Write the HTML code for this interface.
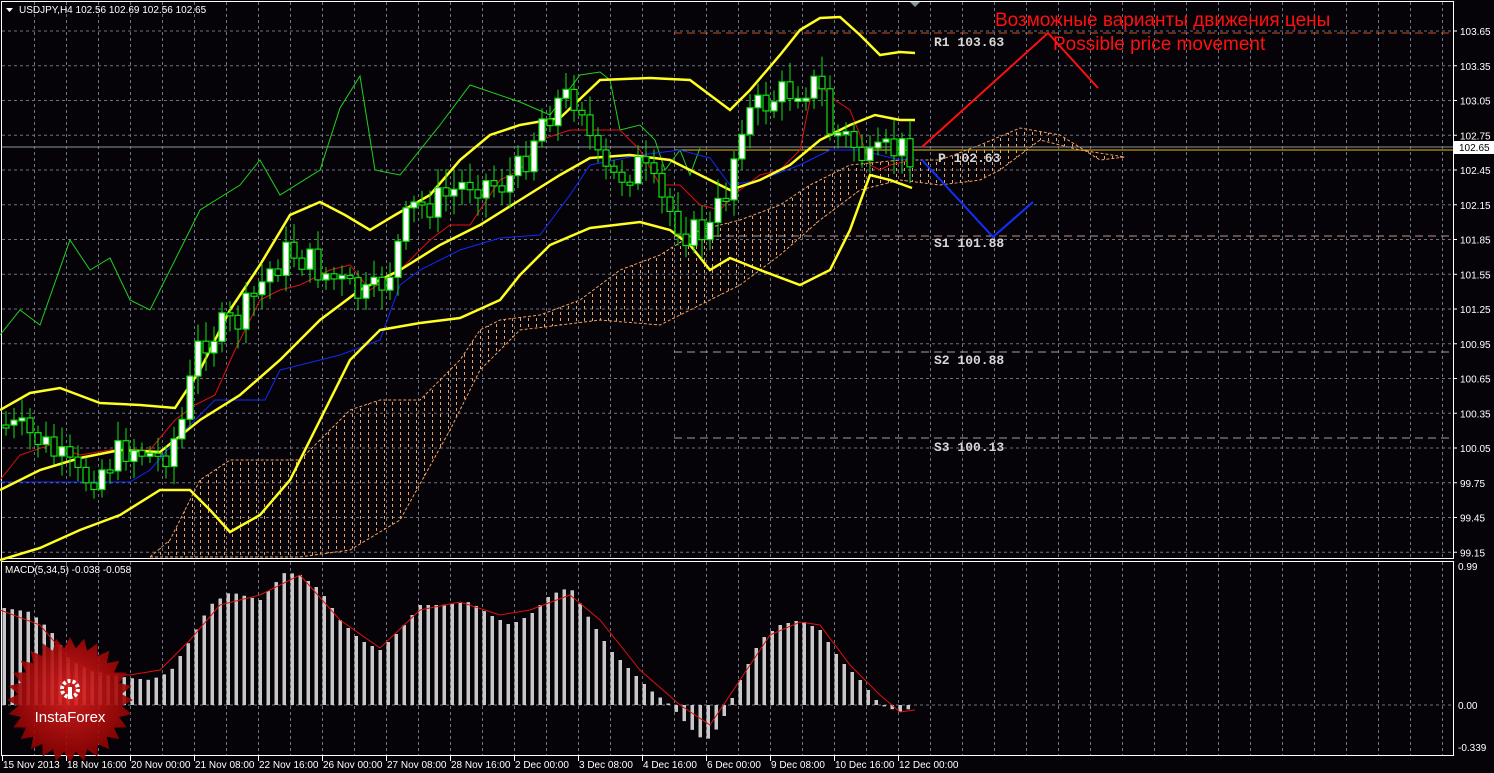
<!DOCTYPE html>
<html><head><meta charset="utf-8"><style>
html,body{margin:0;padding:0;background:#050308;width:1494px;height:773px;overflow:hidden}
svg{display:block}
text{font-family:"Liberation Sans",sans-serif}
text.mono{font-family:"Liberation Mono",monospace;font-weight:bold}
</style></head><body>
<svg id="s" width="1494" height="773" viewBox="0 0 1494 773" xmlns="http://www.w3.org/2000/svg">
<defs>
<pattern id="dots" width="8" height="6" patternUnits="userSpaceOnUse">
<rect x="0" y="0" width="1" height="3" fill="#f0a060"/>
</pattern>
<radialGradient id="lg" cx="50%" cy="45%" r="55%"><stop offset="0" stop-color="#e02020"/><stop offset="1" stop-color="#8a0000"/></radialGradient>
</defs>
<g id="grid"></g>
<g id="cloud"></g>
<g id="lines"></g>
<g id="candles"></g>
<g id="macd"></g>
<g id="labels"></g>
</svg>
<script>
const NS="http://www.w3.org/2000/svg";
function el(parent,tag,attrs,txt){const e=document.createElementNS(NS,tag);for(const k in attrs)e.setAttribute(k,attrs[k]);if(txt!==undefined)e.textContent=txt;document.getElementById(parent).appendChild(e);return e;}
function pts(a){return a.map(p=>p.join(',')).join(' ');}
function interp(a,x){for(let i=0;i<a.length-1;i++){if(x>=a[i][0]&&x<=a[i+1][0]){const t=(x-a[i][0])/(a[i+1][0]-a[i][0]);return a[i][1]+t*(a[i+1][1]-a[i][1]);}}return x<a[0][0]?a[0][1]:a[a.length-1][1];}
for(let x=34.5;x<1450;x+=32){el('grid','line',{x1:x,y1:2,x2:x,y2:558,stroke:'#6a7380','stroke-dasharray':'3,3'});el('grid','line',{x1:x,y1:562,x2:x,y2:755,stroke:'#6a7380','stroke-dasharray':'3,3'});}
const lbl=["103.65","103.35","103.05","102.75","102.45","102.15","101.85","101.55","101.25","100.95","100.65","100.35","100.05","99.75","99.45","99.15"];
for(let i=0;i<16;i++){const y=31+i*34.75;el('grid','line',{x1:2,y1:y,x2:1453,y2:y,stroke:'#6a7380','stroke-dasharray':'3,3'});el('labels','text',{x:1460,y:y+4,fill:'#fff','font-size':'10'},lbl[i]);el('labels','line',{x1:1454,y1:y,x2:1457,y2:y,stroke:'#fff'});}
el('grid','line',{x1:2,y1:705,x2:1453,y2:705,stroke:'#6a7380','stroke-dasharray':'3,3'});
el('grid','rect',{x:1.5,y:1.5,width:1452,height:557,fill:'none',stroke:'#fff'});
el('grid','rect',{x:1.5,y:561.5,width:1452,height:194,fill:'none',stroke:'#fff'});
const cu=[[150,557],[170,540],[200,480],[230,460],[300,460],[320,440],[350,410],[380,400],[420,400],[460,360],[480,330],[500,320],[540,315],[580,300],[620,270],[660,255],[700,230],[740,220],[780,205],[810,185],[850,165],[900,160],[940,160],[980,145],[1020,128],[1060,135],[1100,160],[1125,157]];
const cl=[[150,557],[300,557],[350,550],[400,520],[450,430],[480,370],[520,330],[560,325],[600,320],[660,325],[700,305],[740,285],[780,255],[820,220],[860,190],[900,180],[940,185],[980,180],[1000,170],[1040,140],[1080,150],[1125,157]];
el('cloud','polygon',{points:pts(cu.concat(cl.slice().reverse())),fill:'url(#dots)',stroke:'none'});
el('cloud','polyline',{points:pts(cu),fill:'none',stroke:'#f0a060','stroke-dasharray':'3,2','stroke-width':1});
el('cloud','polyline',{points:pts(cl),fill:'none',stroke:'#f0a060','stroke-dasharray':'3,2','stroke-width':1});
el('lines','line',{x1:2,y1:147,x2:1453,y2:147,stroke:'#8a949e'});
el('lines','line',{x1:674,y1:150,x2:1453,y2:150,stroke:'#e8c000'});
el('lines','line',{x1:674,y1:33,x2:1453,y2:33,stroke:'#c8502a','stroke-dasharray':'8,5'});
el('lines','line',{x1:674,y1:236,x2:1453,y2:236,stroke:'#c89080','stroke-dasharray':'8,5'});
el('lines','line',{x1:674,y1:352,x2:1453,y2:352,stroke:'#a0a0a0','stroke-dasharray':'8,5'});
el('lines','line',{x1:674,y1:438,x2:1453,y2:438,stroke:'#a0a0a0','stroke-dasharray':'8,5'});
const green=[[0,335],[20,310],[40,325],[70,240],[90,270],[110,258],[130,300],[150,310],[180,250],[200,210],[240,185],[260,160],[280,195],[320,170],[340,108],[360,76],[375,170],[400,175],[440,125],[470,85],[520,102],[550,115],[580,75],[600,72],[610,80],[620,130],[640,125],[655,140],[665,170],[680,150],[690,175],[700,148]];
el('lines','polyline',{points:pts(green),fill:'none',stroke:'#20d020','stroke-width':1});
const blue=[[0,482],[130,482],[150,470],[185,430],[215,400],[265,400],[280,370],[340,355],[380,340],[400,285],[420,270],[460,250],[500,238],[540,235],[570,195],[590,165],[640,155],[680,150],[710,158],[730,185],[760,180],[800,165],[830,150],[860,150],[900,160],[915,158]];
el('lines','polyline',{points:pts(blue),fill:'none',stroke:'#1028ff','stroke-width':1});
const red=[[0,480],[20,455],[50,445],[80,455],[110,450],[150,450],[175,420],[195,405],[215,395],[235,350],[260,300],[280,290],[300,285],[330,270],[350,265],[370,290],[400,270],[430,240],[450,225],[470,225],[500,180],[520,170],[540,140],[570,130],[600,130],[620,130],[640,150],[660,185],[680,185],[700,205],[720,210],[740,190],[760,175],[780,170],[800,150],[810,100],[820,85],[835,100],[850,110],[860,135],[870,165],[880,170],[890,165],[912,160]];
el('lines','polyline',{points:pts(red),fill:'none',stroke:'#e01010','stroke-width':1});
const yu=[[0,410],[30,393],[60,388],[100,403],[140,405],[175,408],[200,370],[230,310],[260,265],[290,215],[320,202],[345,215],[370,230],[395,215],[430,195],[460,160],[490,135],[520,125],[560,118],[600,80],[650,78],[690,80],[710,95],[730,110],[750,90],[780,55],[800,30],[820,18],[840,17],[860,35],[880,55],[900,52],[915,53]];
const ym=[[0,490],[40,470],[80,458],[120,450],[160,452],[200,420],[240,395],[280,360],[320,320],[360,290],[400,270],[440,245],[480,225],[520,200],[560,175],[590,158],[630,155],[670,160],[700,175],[730,190],[760,180],[790,165],[820,140],[850,125],[875,115],[900,120],[915,120]];
const yl=[[0,560],[40,548],[80,530],[120,515],[160,490],[190,490],[210,510],[230,532],[260,515],[290,480],[320,420],[350,360],[380,330],[420,323],[460,318],[500,300],[520,275],[550,245],[590,228],[640,222],[670,230],[690,245],[710,270],[730,258],[760,270],[800,285],[830,270],[850,230],[870,175],[890,180],[912,188]];
[yu,ym,yl].forEach(a=>el('lines','polyline',{points:pts(a),fill:'none',stroke:'#ffff20','stroke-width':2.5}));
const cp=[[5,425],[40,440],[80,480],[100,470],[130,445],[160,460],[180,430],[200,340],[240,320],[270,270],[290,250],[320,270],[350,290],[370,300],[390,270],[410,210],[440,200],[470,180],[500,185],[520,170],[540,120],[560,100],[580,95],[595,160],[610,180],[640,165],[660,200],[690,235],[710,230],[730,180],[740,120],[770,100],[800,85],[820,85],[830,130],[850,140],[870,165],[890,150],[912,150]];
let prev=interp(cp,0);let seed=7;function rnd(){seed=(seed*9301+49297)%233280;return seed/233280;}
for(let x=6;x<=912;x+=8){let c=interp(cp,x)+(rnd()-0.5)*34;let o=prev;let top=Math.min(o,c),bot=Math.max(o,c);if(bot-top<3)bot=top+3;
el('candles','line',{x1:x,y1:top-6-rnd()*14,x2:x,y2:bot+6+rnd()*14,stroke:'#10e010'});
el('candles','rect',{x:x-3,y:top,width:6,height:bot-top,fill:(c<o?'#fff':'#000'),stroke:'#10e010','stroke-width':1.2});prev=c;}
el('lines','polyline',{points:'922,147 1048,33 1098,88',fill:'none',stroke:'#ff1010','stroke-width':2});
el('lines','polyline',{points:'922,160 993,237 1033,202',fill:'none',stroke:'#1030ff','stroke-width':2});
const mh=[[4,608],[30,612],[50,630],[70,660],[90,670],[110,675],[130,678],[150,680],[170,672],[190,640],[210,605],[230,592],[260,600],[285,572],[300,575],[320,590],[340,620],[360,640],[380,650],[400,630],[420,605],[440,605],[470,602],[490,615],[510,625],[530,615],[550,595],[570,587],[590,620],[610,650],[630,670],[650,690],[670,705],[690,728],[705,742],[720,725],[740,680],[760,640],[780,625],[800,620],[820,630],[840,660],[860,680],[880,705],[900,712],[912,708]];
for(let x=4;x<=912;x+=8){const v=interp(mh,x);el('macd','rect',{x:x-1.5,y:Math.min(v,705),width:3.5,height:Math.abs(705-v),fill:'#c8c8c8'});}
const ms=[[0,610],[40,625],[70,660],[100,675],[130,675],[160,670],[190,640],[220,605],[260,595],[300,575],[340,620],[380,648],[420,610],[460,602],[500,615],[530,610],[570,595],[600,620],[640,670],[680,705],[710,725],[740,680],[770,635],[800,622],[820,625],[850,665],[880,695],[900,712],[915,710]];
el('macd','polyline',{points:pts(ms),fill:'none',stroke:'#e01010','stroke-width':1});
let star=[];for(let i=0;i<56;i++){const a=i*Math.PI/28;const r=i%2?52:63;star.push([70+r*Math.cos(a),700+r*Math.sin(a)]);}
el('macd','polygon',{points:pts(star),fill:'url(#lg)','fill-opacity':0.9});
el('macd','circle',{cx:70,cy:689,r:8,fill:'none',stroke:'#fff','stroke-width':4,'stroke-dasharray':'3,2'});
el('macd','rect',{x:68,y:687,width:4,height:12,fill:'#fff'});
el('macd','text',{x:70,y:722,fill:'#fff','font-size':'15','text-anchor':'middle'},'InstaForex');
el('labels','text',{x:19,y:13,fill:'#fff','font-size':'10'},'USDJPY,H4  102.56 102.69 102.56 102.65');
el('labels','polygon',{points:'6,8 13,8 9.5,12',fill:'#fff'});
el('labels','polygon',{points:'910,2 920,2 915,7',fill:'#8a949e'});
el('labels','text',{x:5,y:573,fill:'#fff','font-size':'10'},'MACD(5,34,5) -0.038 -0.058');
el('labels','rect',{x:1454,y:141,width:40,height:13,fill:'#fff'});
el('labels','text',{x:1459,y:151,fill:'#000','font-size':'10'},'102.65');
[['0.99',570],['0.00',709],['-0.339',751]].forEach(a=>el('labels','text',{x:1458,y:a[1],fill:'#fff','font-size':'10'},a[0]));
[['R1 103.63',934,46],['P 102.63',938,162],['S1 101.88',934,247],['S2 100.88',934,364],['S3 100.13',934,451]].forEach(a=>{el('labels','text',{x:a[1],y:a[2],fill:'#d8d8d8','font-size':'13','class':'mono'},a[0]);});
el('labels','text',{x:995,y:26,fill:'#ff1010','font-size':'19'},'Возможные варианты движения цены');
el('labels','text',{x:1053,y:50,fill:'#ff1010','font-size':'19'},'Possible price movement');
const dates=['15 Nov 2013','18 Nov 16:00','20 Nov 00:00','21 Nov 08:00','22 Nov 16:00','26 Nov 00:00','27 Nov 08:00','28 Nov 16:00','2 Dec 00:00','3 Dec 08:00','4 Dec 16:00','6 Dec 00:00','9 Dec 08:00','10 Dec 16:00','12 Dec 00:00'];
dates.forEach((d,i)=>{const x=2+i*64;el('labels','line',{x1:x+0.5,y1:756,x2:x+0.5,y2:761,stroke:'#fff'});el('labels','text',{x:x+1,y:768,fill:'#fff','font-size':'10'},d);});
</script>
</body></html>
